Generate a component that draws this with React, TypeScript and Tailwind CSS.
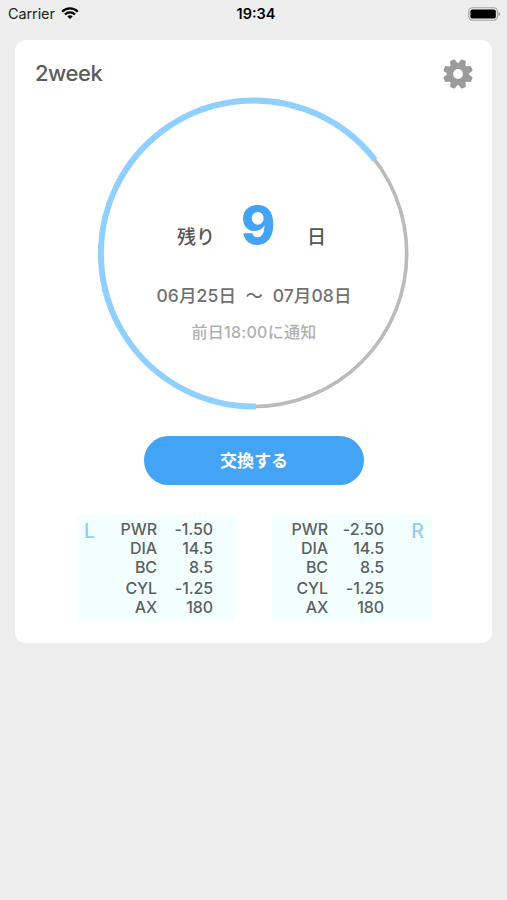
import React from "react";

type Row = { label: string; value: string };

const LEFT: Row[] = [
  { label: "PWR", value: "-1.50" },
  { label: "DIA", value: "14.5" },
  { label: "BC", value: "8.5" },
  { label: "CYL", value: "-1.25" },
  { label: "AX", value: "180" },
];

const RIGHT: Row[] = [{ label: "PWR", value: "-2.50" }, ...LEFT.slice(1)];

function WifiIcon() {
  return (
    <svg width="18" height="13" viewBox="0 0 18 13" fill="none" stroke="#000" strokeWidth="2.3">
      <path d="M1.2 4.7a11 11 0 0 1 15.6 0" />
      <path d="M4 7.5a7.1 7.1 0 0 1 10 0" />
      <path d="M9 12.1 6.3 9.5a3.7 3.7 0 0 1 5.4 0Z" fill="#000" stroke="none" />
    </svg>
  );
}

function BatteryIcon() {
  return (
    <svg width="33" height="14" viewBox="0 0 33 14">
      <rect x="0.8" y="0.8" width="28.6" height="12.4" rx="3.6" fill="none" stroke="#a3a3a3" strokeWidth="1.1" />
      <rect x="2.4" y="2.4" width="25.4" height="9.2" rx="1.9" fill="#000" />
      <path d="M30.6 4.8q1.5 .7 1.5 2.2t-1.5 2.2z" fill="#8c8c8c" />
    </svg>
  );
}

// Eight teeth, with a notch straight up and on every 45 degrees from there.
function gearPoints() {
  const points: string[] = [];
  for (let i = 0; i < 8; i++) {
    const mid = 22.5 + i * 45;
    for (const [offset, r] of [[-15, 10.2], [-6.5, 13.8], [6.5, 13.8], [15, 10.2]]) {
      const a = ((mid + offset) * Math.PI) / 180;
      points.push(`${(16 + r * Math.sin(a)).toFixed(2)},${(16 - r * Math.cos(a)).toFixed(2)}`);
    }
  }
  return points.join(" ");
}

function GearIcon() {
  return (
    <svg width="32" height="32" viewBox="0 0 32 32">
      <polygon points={gearPoints()} fill="#9b9b9b" stroke="#9b9b9b" strokeWidth="2.4" strokeLinejoin="round" />
      <circle cx="16" cy="16" r="4.9" fill="#fff" />
    </svg>
  );
}

function Ring() {
  return (
    <svg className="col-start-1 row-start-1" width="312" height="313" viewBox="0 0 312 313" fill="none">
      <circle cx="155.7" cy="156.5" r="153" stroke="#bbb" strokeWidth="3.6" />
      <path d="M158 309.5A153 153 0 1 1 277 63" stroke="#90d0ff" strokeWidth="6" />
    </svg>
  );
}

function Values({ rows }: { rows: Row[] }) {
  return (
    <div className="flex w-[93px] flex-col text-[16px] leading-[19px] font-medium tracking-[-0.1px] text-[#5b6161]">
      {rows.map((row, i) => (
        <div key={row.label} className={`flex justify-between ${i === 3 ? "mt-[2px]" : ""}`}>
          <span className="w-[37px] text-right whitespace-nowrap">{row.label}</span>
          <span className="text-right">{row.value}</span>
        </div>
      ))}
    </div>
  );
}

export default function App() {
  return (
    <div className="flex h-[900px] w-[507px] flex-col bg-[#ededed] font-['Inter','Noto_Sans_CJK_JP',sans-serif] text-[#555]">
      <header className="grid h-[27px] grid-cols-3 items-center pl-2 pr-[6px] text-black">
        <div className="flex items-center gap-[6px] text-[14.5px] tracking-[-0.1px] text-[#222]">
          <span>Carrier</span>
          <WifiIcon />
        </div>
        <span className="pl-[3px] text-center text-[14.5px] font-semibold">19:34</span>
        <div className="flex justify-end">
          <BatteryIcon />
        </div>
      </header>

      <main className="mt-[13px] ml-[15px] flex h-[603px] w-[477px] flex-col rounded-[11px] bg-white">
        <div className="flex h-[57px] items-start justify-between pt-[18px] pr-[18px] pl-[20px]">
          <h1 className="mt-[1px] text-[22px] leading-[28px] font-medium tracking-[-0.45px] text-[#5c5c5c]">2week</h1>
          <button aria-label="Settings">
            <GearIcon />
          </button>
        </div>

        <div className="ml-[83px] grid h-[312px] w-[312px] grid-cols-1">
          <Ring />
          <div className="col-start-1 row-start-1 flex flex-col items-center pt-[99px]">
            <div className="flex h-[60px] w-full items-baseline pl-[79px] leading-[60px] font-medium">
              <span className="w-[64px] text-[19px]">残り</span>
              <span className="w-[66px] text-[52px] font-extrabold text-[#43a3f5]">9</span>
              <span className="text-[19px]">日</span>
            </div>
            <p className="mt-[27px] text-[17.5px] leading-[26px] font-medium tracking-[0.1px] whitespace-pre text-[#707070]">06月25日  〜  07月08日</p>
            <p className="mt-[11px] text-[16px] leading-[24px] font-medium tracking-[0.3px] text-[#b0b0b0]">前日18:00に通知</p>
          </div>
        </div>

        <button className="mt-[27px] ml-[129px] h-[49px] w-[220px] rounded-full bg-[#43a3f5] pt-[2px] text-[17px] font-bold text-white">
          交換する
        </button>

        <div className="mt-[30px] ml-[62px] flex gap-[37px]">
          <section className="flex h-[106px] w-[158px] bg-[#f3ffff] pt-[5px] pl-[7px]">
            <span className="w-[36px] text-[19.5px] leading-[22px] font-medium text-[#90ccff]">L</span>
            <Values rows={LEFT} />
          </section>
          <section className="flex h-[106px] w-[160px] justify-between bg-[#f3ffff] pt-[5px] pr-[8px] pl-[19px]">
            <Values rows={RIGHT} />
            <span className="text-[19.5px] leading-[22px] font-medium text-[#90ccff]">R</span>
          </section>
        </div>
      </main>
    </div>
  );
}
